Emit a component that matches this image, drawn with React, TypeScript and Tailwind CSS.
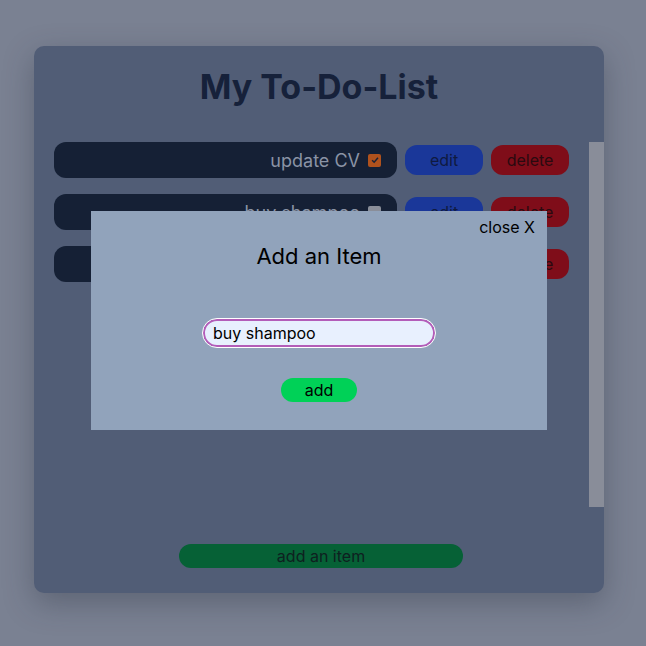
const ITEMS = [
  { text: 'update CV', done: true },
  { text: 'buy shampoo', done: false },
  { text: 'walk the dog', done: false },
];

function Checkbox({ checked }: { checked: boolean }) {
  return (
    <span
      className={
        checked
          ? 'flex h-[13px] w-[13px] items-center justify-center rounded-[2px] bg-[#b0521d]'
          : 'h-[13px] w-[13px] rounded-[2px] bg-[#8a8e99]'
      }
    >
      {checked ? (
        <svg viewBox="0 0 12 12" className="h-[10px] w-[10px]">
          <path d="M2.5 6.2 L5 8.6 L9.6 3.4" fill="none" stroke="#1b2236" strokeWidth="1.8" />
        </svg>
      ) : null}
    </span>
  );
}

function TodoRow({ text, done }: { text: string; done: boolean }) {
  return (
    <li className="flex items-center gap-2">
      <div className="flex h-9 w-[343px] items-center justify-end gap-2 rounded-xl bg-[#152035] pr-4 text-[18px] text-[#8a93a5]">
        <span>{text}</span>
        <Checkbox checked={done} />
      </div>
      <button className="h-[30px] w-[78px] rounded-xl bg-[#1a3799] text-[16px] text-[#0f1a40]">edit</button>
      <button className="h-[30px] w-[78px] rounded-xl bg-[#7f0d19] text-[16px] text-[#2a0a10]">delete</button>
    </li>
  );
}

export default function App() {
  return (
    <div className="relative h-[646px] w-[646px] overflow-hidden bg-[#7a8192] font-['Inter',sans-serif]">
      <div className="ml-[34px] pt-[46px]">
        <div className="flex h-[547px] w-[570px] flex-col rounded-[10px] bg-[#515d76] shadow-[0_10px_30px_rgba(40,45,60,0.35)]">
          <h1 className="mt-[19px] text-center text-[34px] font-bold leading-[44px] text-[#16213a]">My To-Do-List</h1>
          <div className="mt-[33px] flex h-[365px]">
            <ul className="flex flex-1 flex-col gap-4 pl-5">
              {ITEMS.map((item) => (
                <TodoRow key={item.text} text={item.text} done={item.done} />
              ))}
            </ul>
            <div className="w-[15px] bg-[#898d99]" />
          </div>
          <div className="mt-[37px] flex justify-center pl-[4px]">
            <button className="h-6 w-[284px] rounded-full bg-[#066136] text-[16px] text-[#0e2020]">add an item</button>
          </div>
        </div>
      </div>

      <div className="absolute left-[91px] top-[211px] flex h-[219px] w-[456px] flex-col items-center bg-[#91a3bb] text-black">
        <div className="flex w-full justify-end pr-3 pt-[6px]">
          <button className="text-[16px] leading-5">close X</button>
        </div>
        <h2 className="mt-[5px] text-[22px] leading-7">Add an Item</h2>
        <input
          defaultValue="buy shampoo"
          className="mt-[49px] h-7 w-[232px] rounded-full border-2 border-[#b35db9] bg-[#e8f0fe] px-2 text-[16px] text-black outline outline-1 outline-white"
        />
        <button className="mt-[31px] h-6 w-[76px] rounded-full bg-[#00d157] text-[16px]">add</button>
      </div>
    </div>
  );
}
